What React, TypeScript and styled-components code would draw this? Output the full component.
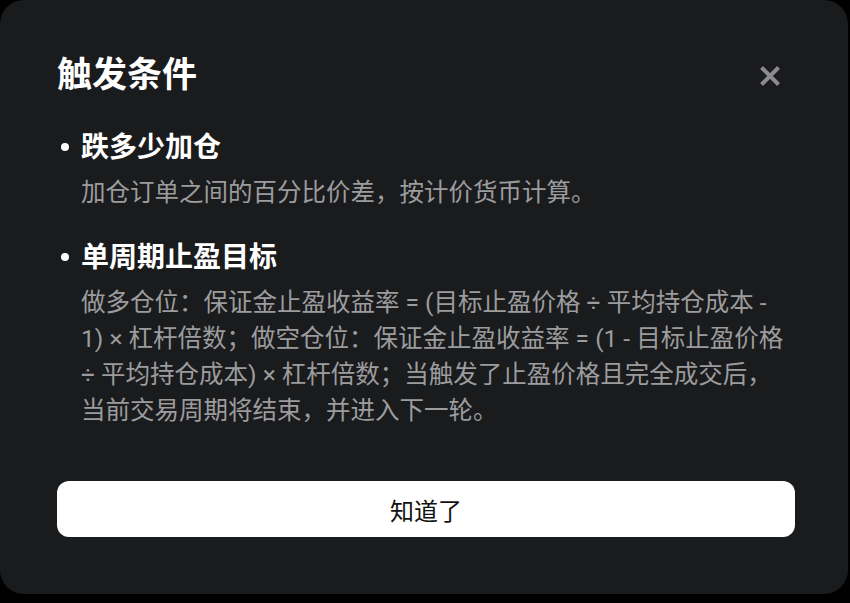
import React from 'react';
import styled, { createGlobalStyle } from 'styled-components';

const GlobalStyle = createGlobalStyle`
  html, body {
    margin: 0;
    padding: 0;
    background: #000000;
  }

  body {
    font-family: Roboto, "Noto Sans CJK SC", sans-serif;
    -webkit-font-smoothing: antialiased;
  }
`;

interface Rule {
  title: string;
  body: string;
}

const rules: Rule[] = [
  {
    title: '跌多少加仓',
    body: '加仓订单之间的百分比价差，按计价货币计算。',
  },
  {
    title: '单周期止盈目标',
    body:
      '做多仓位：保证金止盈收益率 = (目标止盈价格 ÷ 平均持仓成本 - 1) × 杠杆倍数；做空仓位：保证金止盈收益率 = (1 - 目标止盈价格 ÷ 平均持仓成本) × 杠杆倍数；当触发了止盈价格且完全成交后，当前交易周期将结束，并进入下一轮。',
  },
];

const CloseIcon: React.FunctionComponent = () => (
  <svg width="22" height="22" viewBox="0 0 22 22" fill="none">
    <path d="M2.5 2.5 L19.5 19.5 M19.5 2.5 L2.5 19.5" stroke="#8b8b8e" strokeWidth="4" />
  </svg>
);

const App: React.FunctionComponent = () => (
  <>
    <GlobalStyle />
    <Backdrop>
      <Dialog>
        <Header>
          <Title>触发条件</Title>
          <CloseButton aria-label="close">
            <CloseIcon />
          </CloseButton>
        </Header>

        <RuleList>
          {rules.map((rule) => (
            <RuleItem key={rule.title}>
              <RuleTitle>{rule.title}</RuleTitle>
              <RuleBody>{rule.body}</RuleBody>
            </RuleItem>
          ))}
        </RuleList>

        <ConfirmButton>知道了</ConfirmButton>
      </Dialog>
    </Backdrop>
  </>
);

const Backdrop = styled.div`
  background: #000000;
  height: 603px;
  overflow: hidden;
  width: 850px;
`;

const Dialog = styled.div`
  background: #1a1b1d;
  border-radius: 24px;
  box-sizing: border-box;
  display: flex;
  flex-direction: column;
  height: 594px;
  padding: 52px 53px 57px 57px;
  width: 848px;
`;

const Header = styled.div`
  align-items: center;
  display: flex;
  justify-content: space-between;
  padding-right: 14px;
`;

const Title = styled.h2`
  color: #ffffff;
  font-size: 35px;
  font-weight: 700;
  line-height: 48px;
  margin: 0;
`;

const CloseButton = styled.button`
  align-items: center;
  background: none;
  border: none;
  cursor: pointer;
  display: flex;
  padding: 0;
`;

const RuleList = styled.ul`
  display: flex;
  flex-direction: column;
  gap: 27px;
  list-style: none;
  margin: 28px 0 0;
  padding: 0 4px 0 0;
`;

const RuleItem = styled.li`
  display: flex;
  flex-direction: column;
  gap: 7px;
  padding-left: 24px;
`;

const RuleTitle = styled.div`
  color: #ffffff;
  font-size: 28px;
  font-weight: 700;
  line-height: 40px;
  position: relative;

  &::before {
    background: #ffffff;
    border-radius: 50%;
    content: '';
    height: 8px;
    left: -20px;
    position: absolute;
    top: 15px;
    width: 8px;
  }
`;

const RuleBody = styled.p`
  color: #9c9c9e;
  font-size: 24.5px;
  line-height: 36px;
  margin: 0;
`;

const ConfirmButton = styled.button`
  background: #ffffff;
  border: none;
  border-radius: 12px;
  color: #111111;
  cursor: pointer;
  font-family: inherit;
  font-size: 24px;
  height: 56px;
  margin-top: auto;
  width: 100%;
`;

export default App;
